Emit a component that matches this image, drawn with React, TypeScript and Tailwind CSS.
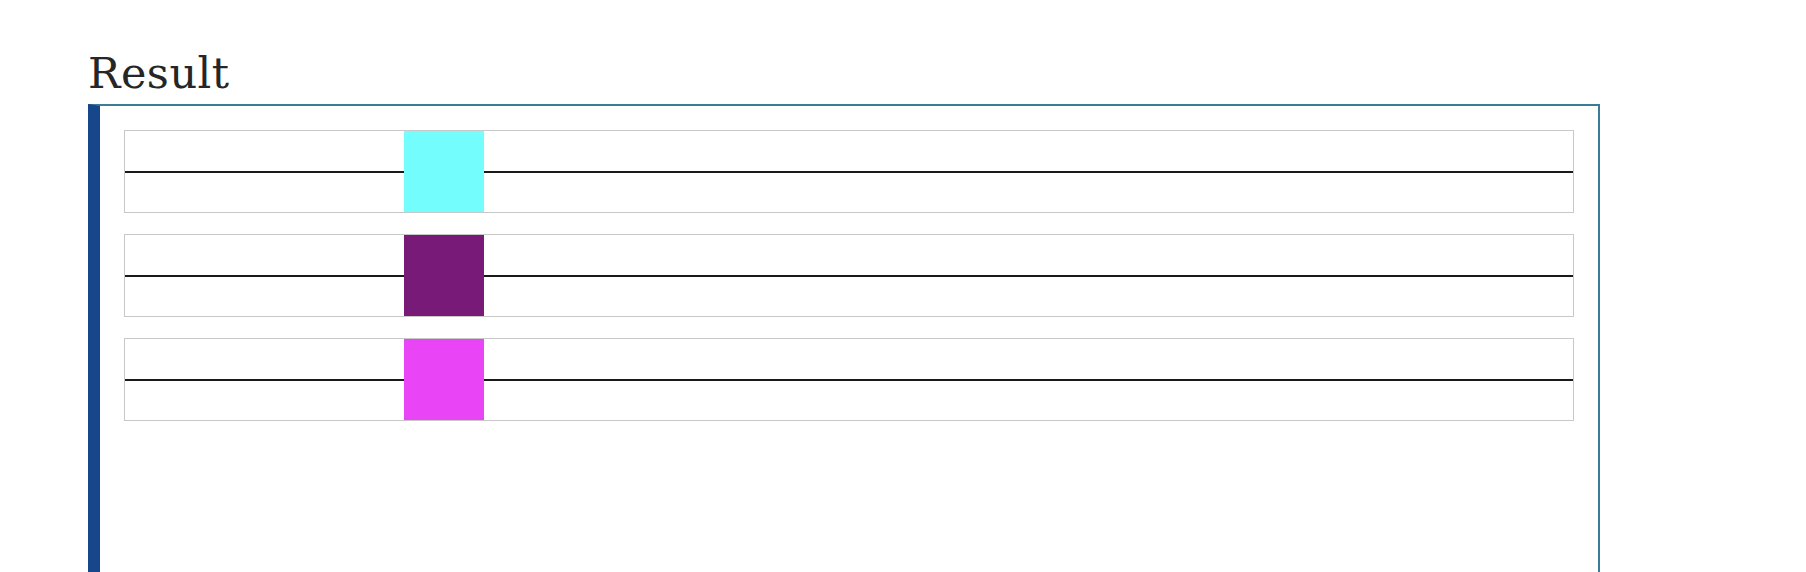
import React from 'react';

const swatches = ['#74fdfd', '#781b78', '#e944f5'];

const ColorRow: React.FC<{ color: string }> = ({ color }) => (
  <div className="flex items-center border border-[#c8c8c8] h-[83px]">
    <div className="w-[279px] h-[2px] bg-[#1a1a1a]" />
    <div className="w-[80px] h-[81px]" style={{ backgroundColor: color }} />
    <div className="flex-1 h-[2px] bg-[#1a1a1a]" />
  </div>
);

export default function App() {
  return (
    <div className="w-[1806px] h-[572px] overflow-hidden bg-white pl-[88px] pt-[52px]">
      <h2 className="text-[43px] leading-[43px] text-[#262626] font-['DejaVu_Serif',serif] tracking-[0.5px]">
        Result
      </h2>
      <div className="mt-[9px] w-[1512px] h-[600px] border-t-2 border-r-2 border-[#3b7d99] border-l-[12px] border-l-[#17468a] p-6">
        <div className="flex flex-col gap-[21px]">
          {swatches.map((c) => (
            <ColorRow key={c} color={c} />
          ))}
        </div>
      </div>
    </div>
  );
}
